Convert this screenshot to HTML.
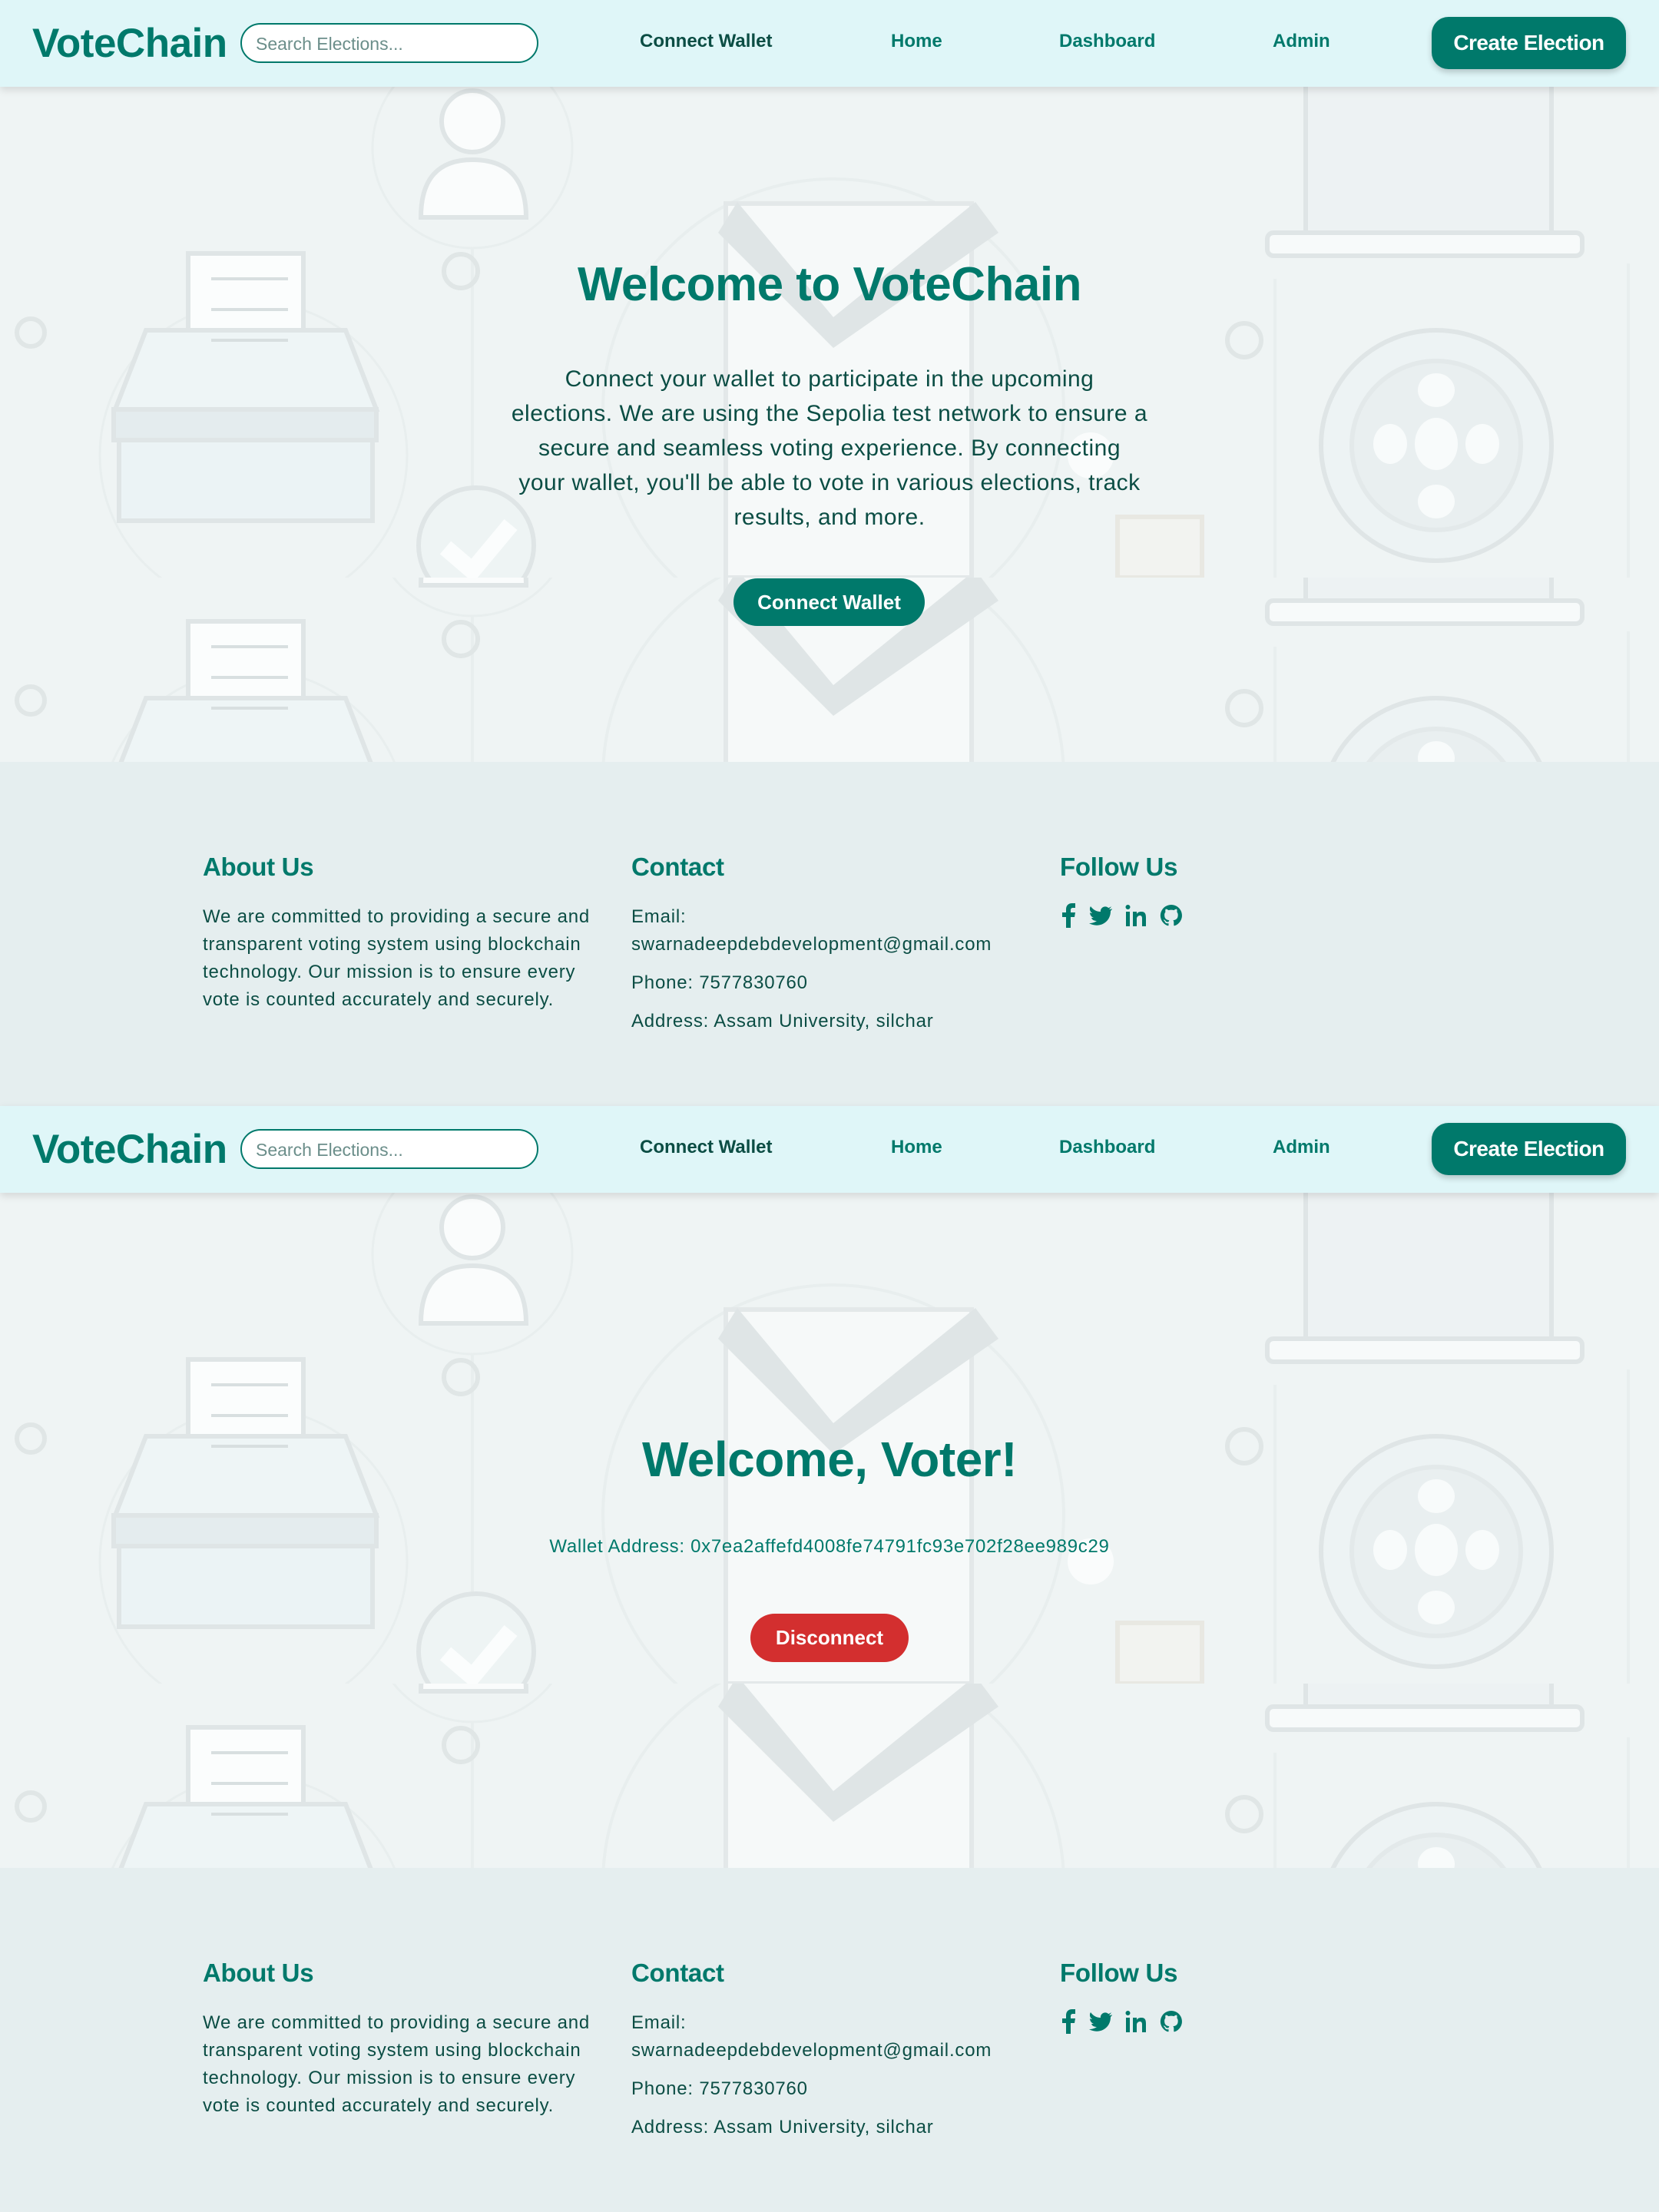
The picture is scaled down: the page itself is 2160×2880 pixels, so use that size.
<!DOCTYPE html>
<html><head><meta charset="utf-8">
<style>
*{margin:0;padding:0;box-sizing:border-box}
body{width:2160px;height:2880px;background:#e5eeef;font-family:"Liberation Sans",sans-serif;position:relative;overflow:hidden}
.sec{position:absolute;left:0;width:2160px;height:1440px}
.nav{position:absolute;left:0;top:0;width:2160px;height:113px;background:#dff6f8;box-shadow:0 4px 10px rgba(0,0,0,.12);z-index:2}
.logo{position:absolute;left:42px;top:26px;font-family:"Liberation Sans",sans-serif;font-weight:bold;font-size:53px;color:#00796b;letter-spacing:-.5px}
.search{position:absolute;left:313px;top:30px;width:388px;height:52px;border:2.5px solid #00796b;border-radius:26px;background:#fff;font-size:23px;color:#6b8e8a;padding:12px 18px}
.nl{position:absolute;top:40px;font-size:24px;font-weight:bold;color:#00796b}
.cb{position:absolute;left:1864px;top:22px;width:253px;height:68px;background:#00796b;border-radius:22px;color:#fff;font-size:28px;font-weight:bold;text-align:center;line-height:68px;box-shadow:0 4px 8px rgba(0,0,0,.2);letter-spacing:-.5px}
.hero{position:absolute;left:0;top:113px;width:2160px;height:879px;background:#eef3f3;overflow:hidden}
.hero svg{position:absolute;left:0;top:0}
.foot{position:absolute;left:0;top:992px;width:2160px;height:448px;background:#e5eeef}
.col{position:absolute;top:118px;color:#0b4d44}
.col h3{font-size:33px;color:#00796b;margin-bottom:28px;letter-spacing:-.3px}
.col p{font-size:24px;line-height:36px;white-space:nowrap;letter-spacing:.8px}
.c{position:absolute;left:0;width:2160px;text-align:center;z-index:1}
</style></head><body>

<svg width="0" height="0" style="position:absolute">
<defs>
<clipPath id="cl"><rect x="0" y="639" width="2160" height="240"/></clipPath>
<g id="tile" fill="none" stroke="#dfe5e6" stroke-width="6">
 <rect x="0" y="0" width="2160" height="639" fill="#eff4f4" stroke="none"/>
 <circle cx="330" cy="480" r="200" stroke="#e8eeee" stroke-width="3"/>
 <circle cx="615" cy="80" r="130" stroke="#e8eeee" stroke-width="3"/>
 <circle cx="1085" cy="420" r="300" stroke="#e8eeee" stroke-width="4"/>
 <line x1="615" y1="210" x2="615" y2="520" stroke="#e8eeee" stroke-width="4"/>
 <line x1="1660" y1="250" x2="1660" y2="639" stroke="#e8eeee" stroke-width="4"/>
 <line x1="2120" y1="230" x2="2120" y2="639" stroke="#e8eeee" stroke-width="4"/>
 <circle cx="40" cy="320" r="18" stroke="#e0e6e6"/>
 <circle cx="600" cy="240" r="22" stroke="#e0e6e6"/>
 <circle cx="1620" cy="330" r="22" stroke="#e0e6e6"/>
 <rect x="245" y="217" width="150" height="150" fill="#fbfdfd"/>
 <path d="M150 420 L190 317 L450 317 L490 420 Z" fill="#eef5f6"/>
 <rect x="148" y="420" width="342" height="40" fill="#e4ecee"/>
 <rect x="155" y="460" width="330" height="105" fill="#ebf3f5"/>
 <line x1="275" y1="250" x2="375" y2="250" stroke="#d8dfe0" stroke-width="4"/>
 <line x1="275" y1="290" x2="375" y2="290" stroke="#d8dfe0" stroke-width="4"/>
 <line x1="275" y1="330" x2="375" y2="330" stroke="#d8dfe0" stroke-width="4"/>
 <circle cx="615" cy="45" r="40" fill="#fafcfc"/>
 <path d="M548 170 Q548 95 615 95 Q685 95 685 170 Z" fill="#fafcfc"/>
 <rect x="945" y="152" width="320" height="487" fill="#f6f9f9" stroke="#e3e8e9"/>
 <path d="M960 150 L1085 300 L1270 150 L1300 190 L1085 340 L935 190 Z" fill="#dfe5e6" stroke="none"/>
 <circle cx="620" cy="597" r="75" fill="#eef4f4"/>
 <path d="M580 600 L615 630 L665 570" stroke="#fbfdfd" stroke-width="22"/>
 <rect x="1700" y="-40" width="320" height="230" fill="#edf2f3"/>
 <rect x="1650" y="190" width="410" height="30" rx="8" fill="#f7fafa"/>
 <circle cx="1870" cy="467" r="150" fill="#edf3f4"/>
 <circle cx="1870" cy="467" r="110" fill="#e9eff0" stroke="#e3e9ea"/>
 <ellipse cx="1870" cy="465" rx="28" ry="34" fill="#f8fbfb" stroke="none"/>
 <ellipse cx="1810" cy="465" rx="22" ry="26" fill="#f8fbfb" stroke="none"/>
 <ellipse cx="1930" cy="465" rx="22" ry="26" fill="#f8fbfb" stroke="none"/>
 <ellipse cx="1870" cy="395" rx="24" ry="22" fill="#f8fbfb" stroke="none"/>
 <ellipse cx="1870" cy="540" rx="24" ry="22" fill="#f8fbfb" stroke="none"/>
 <circle cx="1420" cy="480" r="30" fill="#fbfdfd" stroke="none" opacity=".9"/>
 <rect x="1455" y="560" width="110" height="79" fill="#f2f3f0" stroke="#e8e8e2"/>
</g>
<g id="icons" fill="#00796b">
 <path d="M8 32V18H3v-6h5V8c0-5 3-8 8-8h4v6h-3c-2 0-3 1-3 3v3h6l-1 6h-5v14z"/>
 <path d="M68 7c-1 1-3 1-4 1 1-1 2-2 3-4-1 1-3 2-4 2-4-4-11 0-10 5-6 0-10-3-13-7-2 3-1 7 2 9-1 0-2 0-3-1 0 3 2 6 5 7-1 0-2 0-3 0 1 3 4 4 7 4-3 2-6 3-10 3 12 7 28 0 28-16 1-1 2-2 2-3z"/>
 <path d="M86 11h5v19h-5zM88.5 2a3 3 0 110 6 3 3 0 010-6zM95 11h5v3c1-2 3-3 6-3 5 0 6 3 6 8v11h-5V20c0-3-1-4-3-4s-4 2-4 4v10h-5z"/>
 <path d="M145 2a14 14 0 00-4.5 27.3c.7.1 1-.3 1-.7v-2.5c-3.9.8-4.7-1.7-4.7-1.7-.6-1.6-1.5-2-1.5-2-1.3-.9.1-.9.1-.9 1.4.1 2.1 1.4 2.1 1.4 1.3 2.1 3.3 1.5 4.1 1.2.1-.9.5-1.5.9-1.9-3.1-.4-6.4-1.6-6.4-7 0-1.5.5-2.8 1.4-3.800-.1-.4-.6-1.8.1-3.7 0 0 1.2-.4 3.8 1.4a13 13 0 017 0c2.6-1.8 3.8-1.4 3.8-1.4.7 1.9.2 3.3.1 3.7.9 1 1.4 2.3 1.4 3.8 0 5.4-3.3 6.6-6.4 7 .5.4 1 1.3 1 2.6v3.8c0 .4.3.8 1 .7A14 14 0 00145 2z"/>
</g>
</defs>
</svg>

<!-- SECTION 1 -->
<div class="sec" style="top:0">
 <div class="nav">
  <div class="logo">VoteChain</div>
  <div class="search">Search Elections...</div>
  <div class="nl" style="left:833px;color:#0b4d44">Connect Wallet</div>
  <div class="nl" style="left:1160px">Home</div>
  <div class="nl" style="left:1379px">Dashboard</div>
  <div class="nl" style="left:1657px">Admin</div>
  <div class="cb">Create Election</div>
 </div>
 <div class="hero">
  <svg width="2160" height="879"><use href="#tile" y="0"/><g clip-path="url(#cl)"><use href="#tile" y="479"/></g></svg>
  <div class="c" style="top:222px;font-size:62px;font-weight:bold;color:#00796b;letter-spacing:-.5px">Welcome to VoteChain</div>
  <div class="c" style="top:358px;font-size:30px;line-height:45px;color:#0b4d44;letter-spacing:.5px;white-space:nowrap">Connect your wallet to participate in the upcoming<br>elections. We are using the Sepolia test network to ensure a<br>secure and seamless voting experience. By connecting<br>your wallet, you'll be able to vote in various elections, track<br>results, and more.</div>
  <div style="position:absolute;left:955px;top:640px;width:249px;height:62px;border-radius:31px;background:#00796b;color:#fff;font-size:26px;font-weight:bold;text-align:center;line-height:62px;z-index:1">Connect Wallet</div>
 </div>
 <div class="foot">
  <div class="col" style="left:264px;width:530px"><h3>About Us</h3><p>We are committed to providing a secure and<br>transparent voting system using blockchain<br>technology. Our mission is to ensure every<br>vote is counted accurately and securely.</p></div>
  <div class="col" style="left:822px;width:540px"><h3>Contact</h3><p>Email:<br>swarnadeepdebdevelopment@gmail.com</p><p style="margin-top:14px">Phone: 7577830760</p><p style="margin-top:14px">Address: Assam University, silchar</p></div>
  <div class="col" style="left:1380px"><h3>Follow Us</h3>
   <svg width="170" height="34" viewBox="0 0 170 34"><use href="#icons"/></svg>
  </div>
 </div>
</div>

<!-- SECTION 2 -->
<div class="sec" style="top:1440px">
 <div class="nav">
  <div class="logo">VoteChain</div>
  <div class="search">Search Elections...</div>
  <div class="nl" style="left:833px;color:#0b4d44">Connect Wallet</div>
  <div class="nl" style="left:1160px">Home</div>
  <div class="nl" style="left:1379px">Dashboard</div>
  <div class="nl" style="left:1657px">Admin</div>
  <div class="cb">Create Election</div>
 </div>
 <div class="hero">
  <svg width="2160" height="879"><use href="#tile" y="0"/><g clip-path="url(#cl)"><use href="#tile" y="479"/></g></svg>
  <div class="c" style="top:310px;font-size:64px;font-weight:bold;color:#00796b;letter-spacing:-.5px">Welcome, Voter!</div>
  <div class="c" style="top:447px;font-size:24px;color:#00796b;letter-spacing:.7px">Wallet Address: 0x7ea2affefd4008fe74791fc93e702f28ee989c29</div>
  <div style="position:absolute;left:977px;top:548px;width:206px;height:63px;border-radius:32px;background:#d32f2f;color:#fff;font-size:26px;font-weight:bold;text-align:center;line-height:63px;z-index:1">Disconnect</div>
 </div>
 <div class="foot">
  <div class="col" style="left:264px;width:530px"><h3>About Us</h3><p>We are committed to providing a secure and<br>transparent voting system using blockchain<br>technology. Our mission is to ensure every<br>vote is counted accurately and securely.</p></div>
  <div class="col" style="left:822px;width:540px"><h3>Contact</h3><p>Email:<br>swarnadeepdebdevelopment@gmail.com</p><p style="margin-top:14px">Phone: 7577830760</p><p style="margin-top:14px">Address: Assam University, silchar</p></div>
  <div class="col" style="left:1380px"><h3>Follow Us</h3>
   <svg width="170" height="34" viewBox="0 0 170 34"><use href="#icons"/></svg>
  </div>
 </div>
</div>
</body></html>
